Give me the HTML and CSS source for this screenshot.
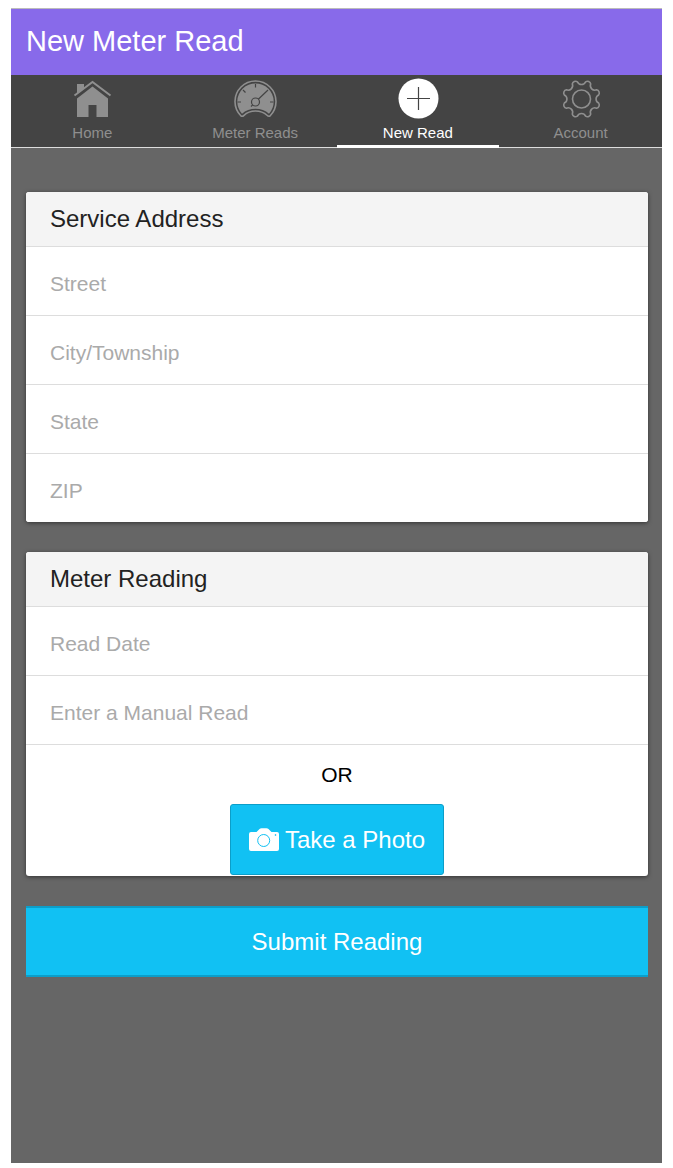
FILE: index.html
```html
<!DOCTYPE html>
<html lang="en">
<head>
<meta charset="utf-8">
<meta name="viewport" content="width=device-width, initial-scale=1">
<title>New Meter Read</title>
<link rel="stylesheet" href="styles.css">
</head>
<body>
<div class="app">
  <header class="bar"><h1 class="bar-title">New Meter Read</h1></header>
  <nav class="tabs" aria-label="Main">
    <a class="tab" href="#home">
      <svg class="tab-icon" viewBox="0 0 44 40" aria-hidden="true">
        <path fill="currentColor" d="M7 15V5h7v4.500l-7 5.500zM22.500 7.500L38 19.500v18.500H26.500V26h-8v12H7V19.500z"/>
        <path fill="none" stroke="currentColor" stroke-width="2" d="M4.500 16.500L22.500 3 40.500 16.500"/>
      </svg>
      <span>Home</span>
    </a>
    <a class="tab" href="#reads">
      <svg class="tab-icon" viewBox="0 0 44 40" aria-hidden="true">
        <path fill="none" stroke="currentColor" stroke-width="1.600" stroke-linejoin="round" d="M8 37A20.500 20.500 0 1 1 37 37Q35.500 37.800 34 36.300C28 30.500 17 30.500 11 36.300Q9.500 37.800 8 37z"/>
        <path fill="currentColor" d="M9 34.800A18.200 18.200 0 1 1 36 34.800C29 28 16 28 9 34.800z"/>
        <g class="dial" fill="none" stroke-width="1.200">
          <circle cx="22.500" cy="23" r="4"/>
          <path d="M25.300 20.200L35 11M19.700 25.800L18 27.500M22.500 5v3.500M10 11l2.500 2.500M4.500 23h3.500M37 23h3.500"/>
        </g>
      </svg>
      <span>Meter Reads</span>
    </a>
    <a class="tab tab-active" href="#new" aria-current="page">
      <svg class="tab-icon" viewBox="0 0 44 40" aria-hidden="true">
        <circle cx="22.500" cy="19.500" r="20" fill="currentColor"/>
        <path class="dial" fill="none" stroke-width="1.200" d="M22.500 8v23M11 19.500h23"/>
      </svg>
      <span>New Read</span>
    </a>
    <a class="tab" href="#account">
      <svg class="tab-icon" viewBox="0 0 44 40" aria-hidden="true">
        <g fill="none" stroke="currentColor" stroke-width="1.600" stroke-linejoin="round" transform="translate(22.500 20)">
          <circle r="9"/>
          <path d="M-4.100-17.200A4.500 4.500 0 0 0 4.100-17.200A3.300 3.300 0 0 1 9.200-15.100A4.500 4.500 0 0 0 15.100-9.200A3.300 3.300 0 0 1 17.200-4.100A4.500 4.500 0 0 0 17.200 4.100A3.300 3.300 0 0 1 15.100 9.200A4.500 4.500 0 0 0 9.200 15.100A3.300 3.300 0 0 1 4.100 17.200A4.500 4.500 0 0 0-4.100 17.200A3.300 3.300 0 0 1-9.200 15.100A4.500 4.500 0 0 0-15.100 9.200A3.300 3.300 0 0 1-17.200 4.100A4.500 4.500 0 0 0-17.200-4.100A3.300 3.300 0 0 1-15.100-9.200A4.500 4.500 0 0 0-9.200-15.100A3.300 3.300 0 0 1-4.100-17.200z"/>
        </g>
      </svg>
      <span>Account</span>
    </a>
  </nav>
  <main class="content">
    <form class="form">
      <section class="card" aria-labelledby="address-title">
        <h2 class="card-title" id="address-title">Service Address</h2>
        <input class="field" type="text" name="street" aria-label="Street" placeholder="Street">
        <input class="field" type="text" name="city" aria-label="City/Township" placeholder="City/Township">
        <input class="field" type="text" name="state" aria-label="State" placeholder="State">
        <input class="field field-last" type="text" name="zip" aria-label="ZIP" placeholder="ZIP">
      </section>
      <section class="card" aria-labelledby="reading-title">
        <h2 class="card-title" id="reading-title">Meter Reading</h2>
        <input class="field" type="text" name="date" aria-label="Read Date" placeholder="Read Date">
        <input class="field" type="text" name="read" aria-label="Enter a Manual Read" placeholder="Enter a Manual Read">
        <div class="photo">
          <p class="or">OR</p>
          <button class="button button-photo" type="button">
            <svg class="camera" viewBox="0 0 30 24" aria-hidden="true">
              <path fill="currentColor" d="M2 4h5.500l3-3q.8-.8 2-.8h5q1.200 0 2 .8l3 3H28q2 0 2 2v15q0 2-2 2H2q-2 0-2-2V6q0-2 2-2z"/>
              <circle class="lens" cx="14.700" cy="12.500" r="6" fill="none"/>
              <circle class="lens" cx="26.500" cy="7" r=".5" fill="none"/>
            </svg>
            Take a Photo
          </button>
        </div>
      </section>
      <button class="button button-submit" type="submit">Submit Reading</button>
    </form>
  </main>
</div>
</body>
</html>
```
FILE: styles.css
```css
* {
  box-sizing: border-box;
}

body {
  margin: 0;
  background: #fff;
  color: #000;
  font-family: "Liberation Sans", Arial, sans-serif;
}

.app {
  display: flex;
  flex-direction: column;
  min-height: calc(100vh - 13px);
  margin: 8px 11px 5px;
  background: #666;
}

.bar {
  padding: 15px 15px 17px;
  border-top: 1px solid #bbb;
  background: #886aea;
}

.bar-title {
  margin: 0;
  color: #fff;
  font-size: 29px;
  font-weight: 400;
  line-height: 34px;
}

.tabs {
  display: grid;
  grid-template-columns: repeat(4, 1fr);
  border-bottom: 1px solid #ddd;
  background: #444;
}

.tab {
  display: flex;
  flex-direction: column;
  align-items: center;
  margin-bottom: -1px;
  padding: 4px 0 3px;
  border-bottom: 3px solid transparent;
  color: #8f8f8f;
  font-size: 15px;
  line-height: 18px;
  gap: 5px;
  text-decoration: none;
}

.tab-active {
  border-bottom-color: #fff;
  color: #fff;
}

.tab-icon {
  width: 44px;
  height: 40px;
  overflow: visible;
}

.dial {
  stroke: #444;
}

.content {
  flex: 1;
  padding: 44px 14px 30px 15px;
}

.form {
  display: flex;
  flex-direction: column;
  gap: 30px;
}

.card {
  display: flex;
  flex-direction: column;
  overflow: hidden;
  border-radius: 3px;
  background: #fff;
  box-shadow: 0 1px 4px rgba(0, 0, 0, 0.5);
}

.card-title {
  margin: 0;
  padding: 13px 24px;
  border-bottom: 1px solid #ddd;
  background: #f4f4f4;
  color: #222;
  font-size: 24px;
  font-weight: 400;
  line-height: 28px;
}

.field {
  width: 100%;
  height: 69px;
  padding: 5px 24px 0;
  border: 0;
  border-bottom: 1px solid #ddd;
  border-radius: 0;
  background: #fff;
  color: #111;
  font-family: inherit;
  font-size: 21px;
}

.field::placeholder {
  color: #aaa;
  opacity: 1;
}

.field-last {
  height: 68px;
  border-bottom: 0;
}

.photo {
  display: flex;
  flex-direction: column;
  align-items: center;
  padding: 18px 0 1px;
  gap: 17px;
}

.or {
  margin: 0;
  font-size: 21px;
  line-height: 24px;
}

.button {
  display: flex;
  align-items: center;
  justify-content: center;
  height: 71px;
  border: 1px solid #0c9ec9;
  background: #11c1f3;
  color: #fff;
  font-family: inherit;
  font-size: 24px;
  line-height: 28px;
}

.button-photo {
  padding: 0 18px;
  border-radius: 3px;
  gap: 6px;
}

.button-submit {
  width: 100%;
  border-width: 2px 0;
}

.camera {
  width: 30px;
  height: 24px;
}

.lens {
  stroke: #11c1f3;
}
```
